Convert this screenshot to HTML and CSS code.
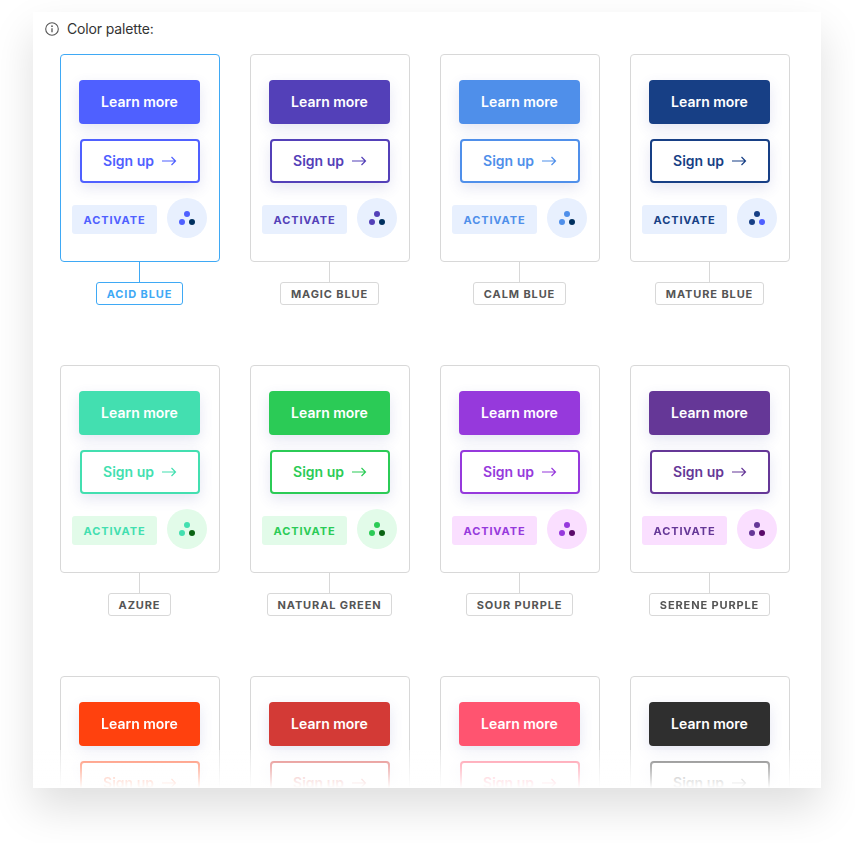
FILE: index.html
```html
<!DOCTYPE html>
<html lang="en">
<head>
<meta charset="utf-8">
<title>Color palette</title>
<link rel="stylesheet" href="styles.css">
</head>
<body>
<main class="panel">
  <header class="heading">
    <svg class="info" width="14" height="14" viewBox="0 0 14 14" fill="none"><circle cx="7" cy="7" r="6.3" stroke="#555" stroke-width="1.1"/><path d="M7 6.2V10.2" stroke="#555" stroke-width="1.3"/><circle cx="7" cy="4.2" r=".85" fill="#555"/></svg>
    <span>Color palette:</span>
  </header>
  <section class="grid">
    <article class="cell t-acid is-active"><div class="card"><button class="primary">Learn more</button><button class="secondary">Sign up <svg width="16" height="12" viewBox="0 0 16 12" fill="none"><path d="M1 6h13.5M10.5 2l4 4-4 4" stroke="currentColor" stroke-width="1.2"/></svg></button><div class="actions"><span class="activate">ACTIVATE</span><span class="dots"><i></i><i></i><i></i></span></div></div><div class="stem"></div><div class="name">ACID BLUE</div></article>
    <article class="cell t-magic"><div class="card"><button class="primary">Learn more</button><button class="secondary">Sign up <svg width="16" height="12" viewBox="0 0 16 12" fill="none"><path d="M1 6h13.5M10.5 2l4 4-4 4" stroke="currentColor" stroke-width="1.2"/></svg></button><div class="actions"><span class="activate">ACTIVATE</span><span class="dots"><i></i><i></i><i></i></span></div></div><div class="stem"></div><div class="name">MAGIC BLUE</div></article>
    <article class="cell t-calm"><div class="card"><button class="primary">Learn more</button><button class="secondary">Sign up <svg width="16" height="12" viewBox="0 0 16 12" fill="none"><path d="M1 6h13.5M10.5 2l4 4-4 4" stroke="currentColor" stroke-width="1.2"/></svg></button><div class="actions"><span class="activate">ACTIVATE</span><span class="dots"><i></i><i></i><i></i></span></div></div><div class="stem"></div><div class="name">CALM BLUE</div></article>
    <article class="cell t-mature"><div class="card"><button class="primary">Learn more</button><button class="secondary">Sign up <svg width="16" height="12" viewBox="0 0 16 12" fill="none"><path d="M1 6h13.5M10.5 2l4 4-4 4" stroke="currentColor" stroke-width="1.2"/></svg></button><div class="actions"><span class="activate">ACTIVATE</span><span class="dots"><i></i><i></i><i></i></span></div></div><div class="stem"></div><div class="name">MATURE BLUE</div></article>
    <article class="cell t-azure"><div class="card"><button class="primary">Learn more</button><button class="secondary">Sign up <svg width="16" height="12" viewBox="0 0 16 12" fill="none"><path d="M1 6h13.5M10.5 2l4 4-4 4" stroke="currentColor" stroke-width="1.2"/></svg></button><div class="actions"><span class="activate">ACTIVATE</span><span class="dots"><i></i><i></i><i></i></span></div></div><div class="stem"></div><div class="name">AZURE</div></article>
    <article class="cell t-green"><div class="card"><button class="primary">Learn more</button><button class="secondary">Sign up <svg width="16" height="12" viewBox="0 0 16 12" fill="none"><path d="M1 6h13.5M10.5 2l4 4-4 4" stroke="currentColor" stroke-width="1.2"/></svg></button><div class="actions"><span class="activate">ACTIVATE</span><span class="dots"><i></i><i></i><i></i></span></div></div><div class="stem"></div><div class="name">NATURAL GREEN</div></article>
    <article class="cell t-sour"><div class="card"><button class="primary">Learn more</button><button class="secondary">Sign up <svg width="16" height="12" viewBox="0 0 16 12" fill="none"><path d="M1 6h13.5M10.5 2l4 4-4 4" stroke="currentColor" stroke-width="1.2"/></svg></button><div class="actions"><span class="activate">ACTIVATE</span><span class="dots"><i></i><i></i><i></i></span></div></div><div class="stem"></div><div class="name">SOUR PURPLE</div></article>
    <article class="cell t-serene"><div class="card"><button class="primary">Learn more</button><button class="secondary">Sign up <svg width="16" height="12" viewBox="0 0 16 12" fill="none"><path d="M1 6h13.5M10.5 2l4 4-4 4" stroke="currentColor" stroke-width="1.2"/></svg></button><div class="actions"><span class="activate">ACTIVATE</span><span class="dots"><i></i><i></i><i></i></span></div></div><div class="stem"></div><div class="name">SERENE PURPLE</div></article>
    <article class="cell t-orange"><div class="card"><button class="primary">Learn more</button><button class="secondary">Sign up <svg width="16" height="12" viewBox="0 0 16 12" fill="none"><path d="M1 6h13.5M10.5 2l4 4-4 4" stroke="currentColor" stroke-width="1.2"/></svg></button></div></article>
    <article class="cell t-red"><div class="card"><button class="primary">Learn more</button><button class="secondary">Sign up <svg width="16" height="12" viewBox="0 0 16 12" fill="none"><path d="M1 6h13.5M10.5 2l4 4-4 4" stroke="currentColor" stroke-width="1.2"/></svg></button></div></article>
    <article class="cell t-pink"><div class="card"><button class="primary">Learn more</button><button class="secondary">Sign up <svg width="16" height="12" viewBox="0 0 16 12" fill="none"><path d="M1 6h13.5M10.5 2l4 4-4 4" stroke="currentColor" stroke-width="1.2"/></svg></button></div></article>
    <article class="cell t-dark"><div class="card"><button class="primary">Learn more</button><button class="secondary">Sign up <svg width="16" height="12" viewBox="0 0 16 12" fill="none"><path d="M1 6h13.5M10.5 2l4 4-4 4" stroke="currentColor" stroke-width="1.2"/></svg></button></div></article>
  </section>
  <div class="fade"></div>
</main>
</body>
</html>
```
FILE: styles.css
```css
* { box-sizing: border-box; }
html, body { height: 100%; }
body {
  margin: 0;
  background: #fff;
  font-family: Inter, "Liberation Sans", sans-serif;
  overflow: hidden;
}
.panel {
  position: relative;
  width: 788px;
  height: 776px;
  margin: 12px 0 0 33px;
  padding: 0 0 0 27px;
  background: #fff;
  border-radius: 2px;
  overflow: hidden;
}
body::before {
  content: "";
  position: fixed;
  left: 33px;
  top: 12px;
  width: 788px;
  height: 776px;
  box-shadow: 0 20px 40px rgba(0, 0, 0, .13);
  z-index: -1;
}
.heading {
  display: flex;
  align-items: center;
  gap: 8px;
  height: 34px;
  margin-left: -15px;
  padding-bottom: 2px;
  font-size: 14px;
  letter-spacing: -.01em;
  color: #333;
}
.info { margin-top: 2px; }
.grid {
  display: grid;
  grid-template-columns: repeat(4, 160px);
  column-gap: 30px;
  grid-auto-rows: 311px;
  margin-top: 8px;
}
.cell { display: flex; flex-direction: column; align-items: center; }
.card {
  width: 160px;
  height: 208px;
  flex: none;
  padding: 25px 0 0 11px;
  display: flex;
  flex-direction: column;
  align-items: flex-start;
  background: #fff;
  border: 1px solid #d8d8d8;
  border-radius: 4px;
}
button {
  font: 600 14px Inter, "Liberation Sans", sans-serif;
  height: 44px;
  border-radius: 4px;
  padding: 0 0 2px;
  box-shadow: 0 5px 14px rgba(70, 80, 170, .14);
}
.primary {
  width: 121px;
  margin-left: 7px;
  border: 0;
  color: #fff;
  background: var(--c);
}
.secondary {
  width: 120px;
  margin: 15px 0 0 8px;
  display: flex;
  align-items: center;
  justify-content: center;
  gap: 7px;
  color: var(--c);
  background: #fff;
  border: 2px solid var(--c);
}
.secondary svg { margin-top: 2px; }
.actions {
  display: flex;
  align-items: flex-start;
  gap: 10px;
  margin-top: 15px;
}
.activate {
  width: 85px;
  height: 29px;
  margin-top: 7px;
  display: flex;
  align-items: center;
  justify-content: center;
  border-radius: 3px;
  background: var(--tint);
  color: var(--c);
  font-size: 11px;
  font-weight: 700;
  letter-spacing: .08em;
}
.dots {
  position: relative;
  width: 40px;
  height: 40px;
  border-radius: 50%;
  background: var(--tint);
}
.dots i {
  position: absolute;
  width: 6px;
  height: 6px;
  border-radius: 50%;
  background: var(--c);
}
.dots i:nth-child(1) { left: 17px; top: 13px; }
.dots i:nth-child(2) { left: 12px; top: 21px; }
.dots i:nth-child(3) { left: 22px; top: 21px; background: var(--dot); }
.stem { width: 1px; height: 20px; flex: none; margin-right: 1px; background: #d8d8d8; }
.name {
  height: 23px;
  padding: 0 9.5px;
  margin-right: 1px;
  display: flex;
  align-items: center;
  border: 1px solid #d8d8d8;
  border-radius: 3px;
  color: #555;
  font-size: 11px;
  font-weight: 700;
  letter-spacing: .08em;
}
.is-active .card, .is-active .name { border-color: #3fa9f5; }
.is-active .stem { background: #3fa9f5; }
.is-active .name { color: #3fa9f5; }
.fade {
  position: absolute;
  left: 0;
  right: 0;
  bottom: 0;
  height: 38px;
  background: linear-gradient(rgba(255, 255, 255, .35), #fff);
}
.t-acid { --c: #4f60ff; --tint: #e8f0fe; --dot: #00305f; }
.t-magic { --c: #5340b8; --tint: #e8f0fe; --dot: #00305f; }
.t-calm { --c: #4f8fea; --tint: #e8f0fe; --dot: #00305f; }
.t-mature { --c: #173f85; --tint: #e8f0fe; --dot: #4f60ff; }
.t-azure { --c: #43dfb0; --tint: #e2fbe9; --dot: #0a6413; }
.t-green { --c: #2bcb56; --tint: #e2fbe9; --dot: #0a6413; }
.t-sour { --c: #9639dc; --tint: #fadfff; --dot: #5a0a6a; }
.t-serene { --c: #653797; --tint: #fadfff; --dot: #5a0a6a; }
.t-orange { --c: #ff410e; }
.t-red { --c: #d33a36; }
.t-pink { --c: #ff5470; }
.t-dark { --c: #2f2f2f; }
```
